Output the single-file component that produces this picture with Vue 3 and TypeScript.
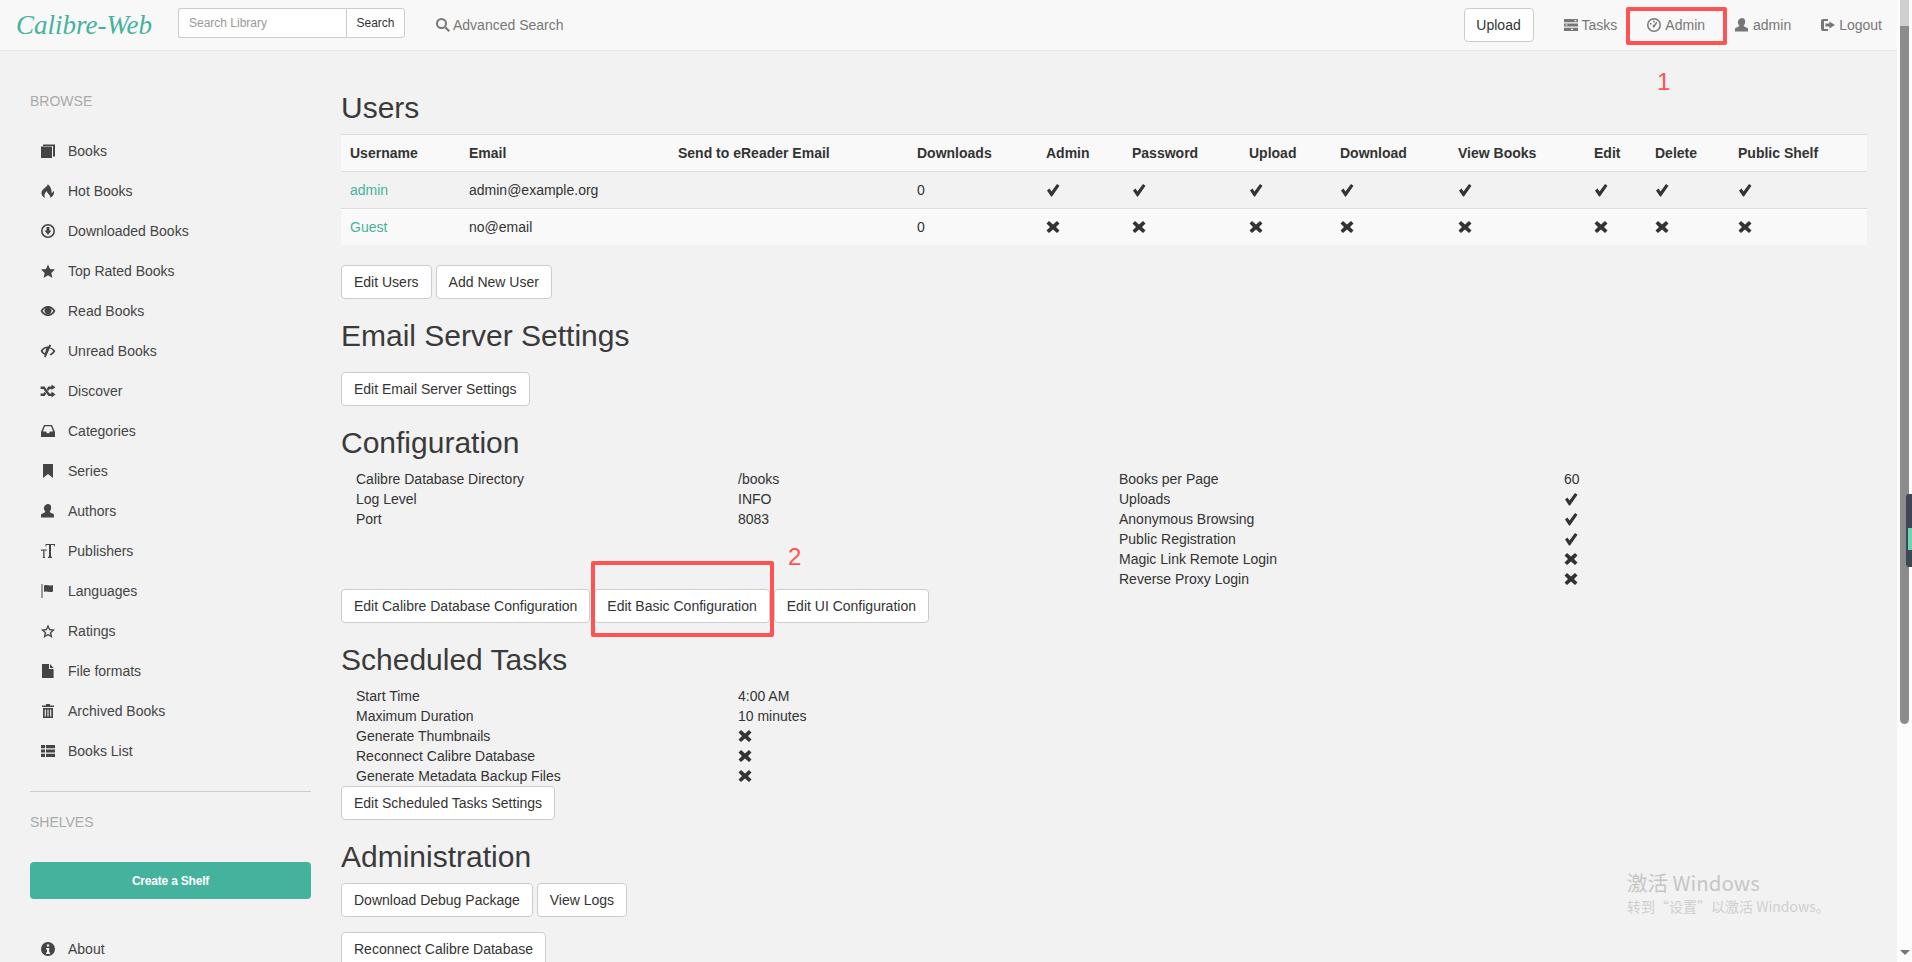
<script setup lang="ts">
const icons: Record<string, string> = {
  book: 'M0 2.4h11v11.6H0Z M2 0.4h12v12h-2V2H2Z',
  fire: 'M6.5 0C7.5 2 3 4 1.2 6.5-.4 9 .8 12.5 4 14 2.6 11.5 3.6 8.8 6 7c-.2 2.6 3.2 3.4 3.2 6 0 .5-.4 1-.7 1 3.6-1 5.3-4 4.2-7.4-.5 1.5-1.4 2.2-2.2 2.4C11 6 9.5 2 6.5 0Z',
  download: 'M7 0a7 7 0 1 0 0 14A7 7 0 0 0 7 0Zm0 1.6a5.4 5.4 0 1 1 0 10.8A5.4 5.4 0 0 1 7 1.6Z M5.5 3h3v3.5h2L7 11 3.5 6.5h2Z',
  star: 'M7 0.5l2 4.6 5 .5-3.7 3.3 1.1 5L7 11.3 2.6 13.9l1.1-5L0 5.6l5-.5Z',
  starEmpty: 'M7 0.5l2 4.6 5 .5-3.7 3.3 1.1 5L7 11.3 2.6 13.9l1.1-5L0 5.6l5-.5Z M7 3.6l1.1 2.7 2.9.2-2.2 1.9.7 2.9L7 9.8 4.5 11.3l.7-2.9L3 6.5l2.9-.2Z',
  eye: 'M7 2C10.8 2 13.4 4.8 14.4 7c-1 2.2-3.6 5-7.4 5S.6 9.2-.4 7C.6 4.8 3.2 2 7 2Z M1.6 7c.8-1.2 2.1-2.4 3.2-2.9a3.4 3.4 0 1 0 4.4 0c1.1 .5 2.4 1.7 3.2 2.9-1.3 1.8-3.2 3.4-5.4 3.4S2.9 8.8 1.6 7Z',
  eyeClose: 'M8.5 0.6 7.5 2.3C3.8 2.4 .8 4.8-.3 7c.7 1.5 2.1 3.1 4.1 4L3 12.8l1.6.6L10.2 1.2Z M5.4 4.1 3.9 9.3C3 8.7 2.2 7.9 1.7 7c.8-1.2 2.3-2.5 3.7-2.9Z M9.6 3.5C11.8 4.3 13.4 5.7 14.4 7c-.8 1.8-2.6 3.7-5 4.5l-.7-1.3C10.4 9.5 11.7 8.1 12.3 7 11.5 6.1 10.2 5 9 4.6Z',
  random: 'M-.4 2.5h3.9l5 7h2V7.5l4 3-4 3V12H7.4L2.4 5H-.4Z M-.4 9.5h2.8l1.3-1.8 1.5 2L3.5 12H-.4Z M7.4 2.5h3.1V.5l4 2.75-4 2.75V5H8.6L7.2 7 5.7 4.9Z',
  inbox: 'M3 1h8l3 7v5H0V8Z M3.9 2.3 1.9 7.5H5l1 1.7h2L9 7.5h3.1L10.1 2.3Z',
  bookmark: 'M2 0h10v14L7 10l-5 4Z',
  user: 'M7 0c2 0 3.2 1.5 3.2 3.5 0 1.5-.6 3-1.5 4 .2.8 1 1.2 2.3 1.8 1.3.6 2 1 2 1.7V13.5H0V11c0-.7.7-1.1 2-1.7 1.3-.6 2.1-1 2.3-1.8-.9-1-1.5-2.5-1.5-4C3.8 1.5 5 0 7 0Z',
  textSize: 'M4.5 0H14v2.6h-.7L12.8 1H10v11.6l1 .5v.9H7v-.9l1-.5V1H5.4l-.3 1.6h-.6Z M0 5.5h5.6v1.6h-.5L4.5 6.4H3.5v6.7l.6.3v.6H1.6v-.6l.6-.3V6.4H1.1L.5 7.1H0Z',
  flag: 'M0.5 0h1v14h-1Z M3 1.5c3-1.5 5 1 9-.5v6.5c-4 1.5-6-1-9 .5Z',
  file: 'M1 0h7v5h4.6v9H1Z M9 0l3.6 4H9Z',
  trash: 'M5 0h4v1.4h4V3H1V1.4h4Z M2 4h10v10H2Z M3.7 5.5v7h1.2v-7Z M6.4 5.5v7h1.2v-7Z M9.1 5.5v7h1.2v-7Z',
  list: 'M0 1h4v3.2H0Z M5 1h9v3.2H5Z M0 5.4h4v3.2H0Z M5 5.4h9v3.2H5Z M0 9.8h4V13H0Z M5 9.8h9V13H5Z',
  info: 'M7 0a7 7 0 1 0 0 14A7 7 0 0 0 7 0Z M5.8 2.5h2.4v2H5.8Z M5 6h3.2v4.5h1V12H5v-1.5h1V7.5H5Z',
  search: 'M5.5 0a5.5 5.5 0 1 0 0 11 5.5 5.5 0 0 0 0-11Zm0 2a3.5 3.5 0 1 1 0 7 3.5 3.5 0 0 1 0-7Z M9.9 8.6l4.1 4-1.5 1.4-4.1-4Z',
  tasks: 'M0 1h14v3.2H0Z M10.5 2h2v1.2h-2Z M0 5.4h14v3.2H0Z M1.5 6.4h2v1.2h-2Z M0 9.8h14V13H0Z M7 10.8h2V12H7Z',
  dashboard: 'M7 0a7 7 0 1 0 0 14A7 7 0 0 0 7 0Zm0 1.5a5.5 5.5 0 1 1 0 11 5.5 5.5 0 0 1 0-11Z M6.2 2.8h1.6v1.6H6.2Z M3 5h1.6v1.6H3Z M9.4 3.8l1 .8L8 8a1.2 1.2 0 1 1-1.2-1Z',
  logout: 'M2 1h5v2H3v8h4v2H2a2 2 0 0 1-2-2V3a2 2 0 0 1 2-2Z M8.4 3.5 14 7l-5.6 3.5V8.6H4.5V5.4h3.9Z',
  ok: 'M1 7.5 3.5 5.5 5.5 8.5 11 1l2.5 1.8L6 13.5H5Z',
  remove: 'M3 1l4 3.5L11 1l2.5 2.5L10 7l3.5 3.5L11 13 7 9.5 3 13 .5 10.5 4 7 .5 3.5Z',
}

const navLinks = [
  { icon: 'tasks', label: 'Tasks' },
  { icon: 'dashboard', label: 'Admin' },
  { icon: 'user', label: 'admin' },
  { icon: 'logout', label: 'Logout' },
]

const browse = [
  { icon: 'book', label: 'Books' },
  { icon: 'fire', label: 'Hot Books' },
  { icon: 'download', label: 'Downloaded Books' },
  { icon: 'star', label: 'Top Rated Books' },
  { icon: 'eye', label: 'Read Books' },
  { icon: 'eyeClose', label: 'Unread Books' },
  { icon: 'random', label: 'Discover' },
  { icon: 'inbox', label: 'Categories' },
  { icon: 'bookmark', label: 'Series' },
  { icon: 'user', label: 'Authors' },
  { icon: 'textSize', label: 'Publishers' },
  { icon: 'flag', label: 'Languages' },
  { icon: 'starEmpty', label: 'Ratings' },
  { icon: 'file', label: 'File formats' },
  { icon: 'trash', label: 'Archived Books' },
  { icon: 'list', label: 'Books List' },
]

const columns = [
  { label: 'Username', width: 120 },
  { label: 'Email', width: 209 },
  { label: 'Send to eReader Email', width: 239 },
  { label: 'Downloads', width: 129 },
  { label: 'Admin', width: 86 },
  { label: 'Password', width: 117 },
  { label: 'Upload', width: 91 },
  { label: 'Download', width: 118 },
  { label: 'View Books', width: 136 },
  { label: 'Edit', width: 61 },
  { label: 'Delete', width: 83 },
  { label: 'Public Shelf', width: 137 },
]

const users = [
  { name: 'admin', email: 'admin@example.org', flag: 'ok' },
  { name: 'Guest', email: 'no@email', flag: 'remove' },
]

type Row = { label: string; value?: string; icon?: string }

const configLeft: Row[] = [
  { label: 'Calibre Database Directory', value: '/books' },
  { label: 'Log Level', value: 'INFO' },
  { label: 'Port', value: '8083' },
]
const configRight: Row[] = [
  { label: 'Books per Page', value: '60' },
  { label: 'Uploads', icon: 'ok' },
  { label: 'Anonymous Browsing', icon: 'ok' },
  { label: 'Public Registration', icon: 'ok' },
  { label: 'Magic Link Remote Login', icon: 'remove' },
  { label: 'Reverse Proxy Login', icon: 'remove' },
]
const scheduled: Row[] = [
  { label: 'Start Time', value: '4:00 AM' },
  { label: 'Maximum Duration', value: '10 minutes' },
  { label: 'Generate Thumbnails', icon: 'remove' },
  { label: 'Reconnect Calibre Database', icon: 'remove' },
  { label: 'Generate Metadata Backup Files', icon: 'remove' },
]
</script>

<template>
  <div class="page">
    <header class="navbar">
      <span class="logo">Calibre-Web</span>
      <div class="search">
        <input class="search-input" placeholder="Search Library" />
        <button class="search-btn">Search</button>
      </div>
      <a class="nav-link adv">
        <svg class="ico" viewBox="0 0 14 14"><path :d="icons.search" fill-rule="evenodd" /></svg>
        Advanced Search
      </a>
      <div class="nav-right">
        <button class="btn upload">Upload</button>
        <a v-for="l in navLinks" :key="l.icon" class="nav-link">
          <svg class="ico" viewBox="0 0 14 14"><path :d="icons[l.icon]" fill-rule="evenodd" /></svg>
          {{ l.label }}
        </a>
      </div>
    </header>

    <div class="body-row">
      <aside class="sidebar">
        <div class="side-title">BROWSE</div>
        <ul class="side-list">
          <li v-for="b in browse" :key="b.label" class="side-item">
            <svg class="ico" viewBox="0 0 14 14"><path :d="icons[b.icon]" fill-rule="evenodd" /></svg>
            <span>{{ b.label }}</span>
          </li>
        </ul>
        <hr class="side-rule" />
        <div class="side-title">SHELVES</div>
        <button class="shelf-btn">Create a Shelf</button>
        <div class="side-item about">
          <svg class="ico" viewBox="0 0 14 14"><path :d="icons.info" fill-rule="evenodd" /></svg>
          <span>About</span>
        </div>
      </aside>

      <main class="main">
        <h2 class="first">Users</h2>
        <table class="users">
          <colgroup>
            <col v-for="c in columns" :key="c.label" :style="{ width: c.width + 'px' }" />
          </colgroup>
          <thead>
            <tr>
              <th v-for="c in columns" :key="c.label">{{ c.label }}</th>
            </tr>
          </thead>
          <tbody>
            <tr v-for="u in users" :key="u.name">
              <td class="user-name">{{ u.name }}</td>
              <td>{{ u.email }}</td>
              <td></td>
              <td>0</td>
              <td v-for="n in 8" :key="n">
                <svg class="ico" viewBox="0 0 14 14"><path :d="icons[u.flag]" /></svg>
              </td>
            </tr>
          </tbody>
        </table>
        <div class="btn-row users-btns">
          <button class="btn">Edit Users</button>
          <button class="btn">Add New User</button>
        </div>

        <h2>Email Server Settings</h2>
        <div class="btn-row email-btns">
          <button class="btn">Edit Email Server Settings</button>
        </div>

        <h2>Configuration</h2>
        <div class="config">
          <div class="kv-col left">
            <div v-for="r in configLeft" :key="r.label" class="kv">
              <span class="kv-label">{{ r.label }}</span>
              <span>{{ r.value }}</span>
            </div>
          </div>
          <div class="kv-col right">
            <div v-for="r in configRight" :key="r.label" class="kv">
              <span class="kv-label">{{ r.label }}</span>
              <span v-if="r.value">{{ r.value }}</span>
              <svg v-else class="ico" viewBox="0 0 14 14"><path :d="icons[r.icon!]" /></svg>
            </div>
          </div>
        </div>
        <div class="btn-row">
          <button class="btn">Edit Calibre Database Configuration</button>
          <button class="btn">Edit Basic Configuration</button>
          <button class="btn">Edit UI Configuration</button>
        </div>

        <h2>Scheduled Tasks</h2>
        <div class="kv-col left">
          <div v-for="r in scheduled" :key="r.label" class="kv">
            <span class="kv-label">{{ r.label }}</span>
            <span v-if="r.value">{{ r.value }}</span>
            <svg v-else class="ico" viewBox="0 0 14 14"><path :d="icons[r.icon!]" /></svg>
          </div>
        </div>
        <div class="btn-row">
          <button class="btn">Edit Scheduled Tasks Settings</button>
        </div>

        <h2>Administration</h2>
        <div class="btn-row">
          <button class="btn">Download Debug Package</button>
          <button class="btn">View Logs</button>
        </div>
        <div class="btn-row reconnect">
          <button class="btn">Reconnect Calibre Database</button>
        </div>
      </main>
    </div>

    <!-- annotations drawn over the screenshot -->
    <div class="mark mark-admin"></div>
    <div class="mark-num num-1">1</div>
    <div class="mark mark-basic"></div>
    <div class="mark-num num-2">2</div>

    <div class="watermark">
      <div class="wm-big">激活 Windows</div>
      <div class="wm-small">转到“设置”以激活 Windows。</div>
    </div>

    <div class="scrollbar">
      <div class="sb-top"></div>
      <div class="sb-thumb"></div>
      <div class="sb-arrow"></div>
    </div>
    <div class="float-widget"><div class="float-bars"></div></div>
  </div>
</template>

<style>
html,
body {
  margin: 0;
  overflow: hidden;
  background: #f2f2f2;
}
</style>

<style scoped>
.page {
  position: relative;
  height: 100vh;
  overflow: hidden;
  padding-right: 15px;
  box-sizing: border-box;
  background: #f2f2f2;
  color: #333;
  font: 14px/20px "Liberation Sans", Arial, sans-serif;
}

.ico {
  width: 14px;
  height: 14px;
  flex: none;
  fill: currentColor;
  overflow: visible;
}

/* top bar */
.navbar {
  display: flex;
  align-items: center;
  height: 50px;
  padding: 0 15px 0 16px;
  background: #f8f8f8;
  border-bottom: 1px solid #e7e7e7;
}

.logo {
  width: 162px;
  color: #45b29d;
  font: italic 27px/30px "Liberation Serif", serif;
}

.search {
  display: flex;
  height: 30px;
  margin-top: -5px;
}

.search-input {
  box-sizing: border-box;
  width: 168px;
  height: 30px;
  padding: 0 10px;
  border: 1px solid #ccc;
  border-right: 0;
  border-radius: 3px 0 0 3px;
  background: #fff;
  font: 12px "Liberation Sans", Arial, sans-serif;
}

.search-input::placeholder {
  color: #999;
}

.search-btn {
  width: 59px;
  padding: 0;
  border: 1px solid #ccc;
  border-radius: 0 3px 3px 0;
  background: #fff;
  color: #333;
  font: 12px "Liberation Sans", Arial, sans-serif;
}

.nav-link {
  display: flex;
  align-items: center;
  gap: 3px;
  color: #777;
}

.nav-right .nav-link {
  gap: 4px;
}

.adv {
  margin-left: 31px;
}

.nav-right {
  display: flex;
  align-items: center;
  gap: 30px;
  margin-left: auto;
}

.btn {
  height: 34px;
  padding: 6px 12px;
  box-sizing: border-box;
  border: 1px solid #ccc;
  border-radius: 4px;
  background: #fff;
  color: #333;
  font: 14px/20px "Liberation Sans", Arial, sans-serif;
  white-space: nowrap;
}

.upload {
  width: 70px;
  padding: 6px 0;
}

/* left column */
.body-row {
  display: flex;
}

.sidebar {
  box-sizing: border-box;
  flex: none;
  width: 341px;
  padding: 40px 30px 0 30px;
}

.side-title {
  color: #aaa;
}

.side-list {
  margin: 20px 0 0;
  padding: 0;
  list-style: none;
}

.side-item {
  display: flex;
  align-items: center;
  gap: 13px;
  height: 40px;
  padding-left: 11px;
  color: #444;
}

.side-rule {
  margin: 20px 0;
  border: 0;
  border-top: 1px solid #ccc;
}

.shelf-btn {
  display: block;
  width: 100%;
  height: 37px;
  margin-top: 30px;
  border: 0;
  border-radius: 4px;
  background: #45b29d;
  color: #fff;
  font: bold 12px "Liberation Sans", Arial, sans-serif;
  letter-spacing: -0.2px;
}

.about {
  margin-top: 30px;
}

/* main column */
.main {
  flex: 1;
  min-width: 0;
  padding-right: 30px;
}

h2 {
  margin: 20px 0 10px;
  color: #3a3a3a;
  font-size: 30px;
  font-weight: 400;
  line-height: 33px;
}

h2.first {
  margin-top: 40px;
}

.users {
  width: 100%;
  table-layout: fixed;
  border-collapse: collapse;
  background: #f9f9f9;
}

.users th,
.users td {
  height: 36px;
  padding: 0 8px;
  box-sizing: content-box;
  border-top: 1px solid #ddd;
  text-align: left;
  vertical-align: middle;
  white-space: nowrap;
}

.users th:first-child,
.users td:first-child {
  padding-left: 9px;
}

.users th {
  color: #333;
  font-weight: 700;
}

.users tbody tr:first-child {
  background: #f2f2f2;
}

.users .ico {
  display: block;
  color: #333;
}

.user-name {
  color: #45b29d;
}

.btn-row {
  display: flex;
  gap: 4px;
}

.users-btns {
  margin-top: 20px;
}

.email-btns {
  margin-top: 20px;
}

.reconnect {
  margin-top: 15px;
}

.config {
  display: flex;
}

.kv-col {
  display: flex;
  flex-direction: column;
}

.kv-col.left {
  width: 778px;
  padding-left: 15px;
  box-sizing: border-box;
}

.kv-col.left .kv-label {
  width: 382px;
}

.kv-col.right .kv-label {
  width: 445px;
}

.kv {
  display: flex;
  align-items: center;
  height: 20px;
}

.kv-label {
  flex: none;
}

.kv .ico {
  color: #333;
}

/* red boxes over the screenshot */
.mark {
  position: absolute;
  box-sizing: border-box;
  border: 4px solid #ff5252;
  border-radius: 2px;
}

.mark-admin {
  left: 1626px;
  top: 7px;
  width: 101px;
  height: 38px;
}

.mark-basic {
  left: 591px;
  top: 561px;
  width: 183px;
  height: 76px;
}

.mark-num {
  position: absolute;
  color: #ff5252;
  font: 24px/28px "Liberation Sans", Arial, sans-serif;
}

.num-1 {
  left: 1657px;
  top: 68px;
}

.num-2 {
  left: 788px;
  top: 543px;
}

.watermark {
  position: absolute;
  left: 1627px;
  top: 869px;
  color: #c6c6c6;
  font-family: "Noto Sans CJK SC", "Liberation Sans", sans-serif;
}

.wm-big {
  font-size: 20.5px;
  line-height: 27px;
}

.wm-small {
  color: #cfcfcf;
  font-size: 14px;
  line-height: 20px;
}

/* browser scrollbar */
.scrollbar {
  position: absolute;
  top: 0;
  right: 0;
  bottom: 0;
  width: 15px;
  background: #fcfcfc;
}

.sb-top {
  position: absolute;
  left: 3px;
  top: 0;
  width: 9px;
  height: 26px;
  background: #cfcfcf;
}

.sb-thumb {
  position: absolute;
  left: 3px;
  top: 26px;
  width: 9px;
  height: 698px;
  border-radius: 0 0 5px 5px;
  background: #8c8c8c;
}

.sb-arrow {
  position: absolute;
  left: 3px;
  bottom: 7px;
  border-top: 5px solid #777;
  border-left: 5px solid transparent;
  border-right: 5px solid transparent;
}

.float-widget {
  position: absolute;
  right: 0;
  top: 494px;
  width: 6px;
  height: 73px;
  box-sizing: border-box;
  border-radius: 3px 0 0 3px;
  background: #3f4656;
}

.float-bars {
  margin: 34px 0 0 2px;
  height: 22px;
  background: #6fd6b0;
}
</style>
